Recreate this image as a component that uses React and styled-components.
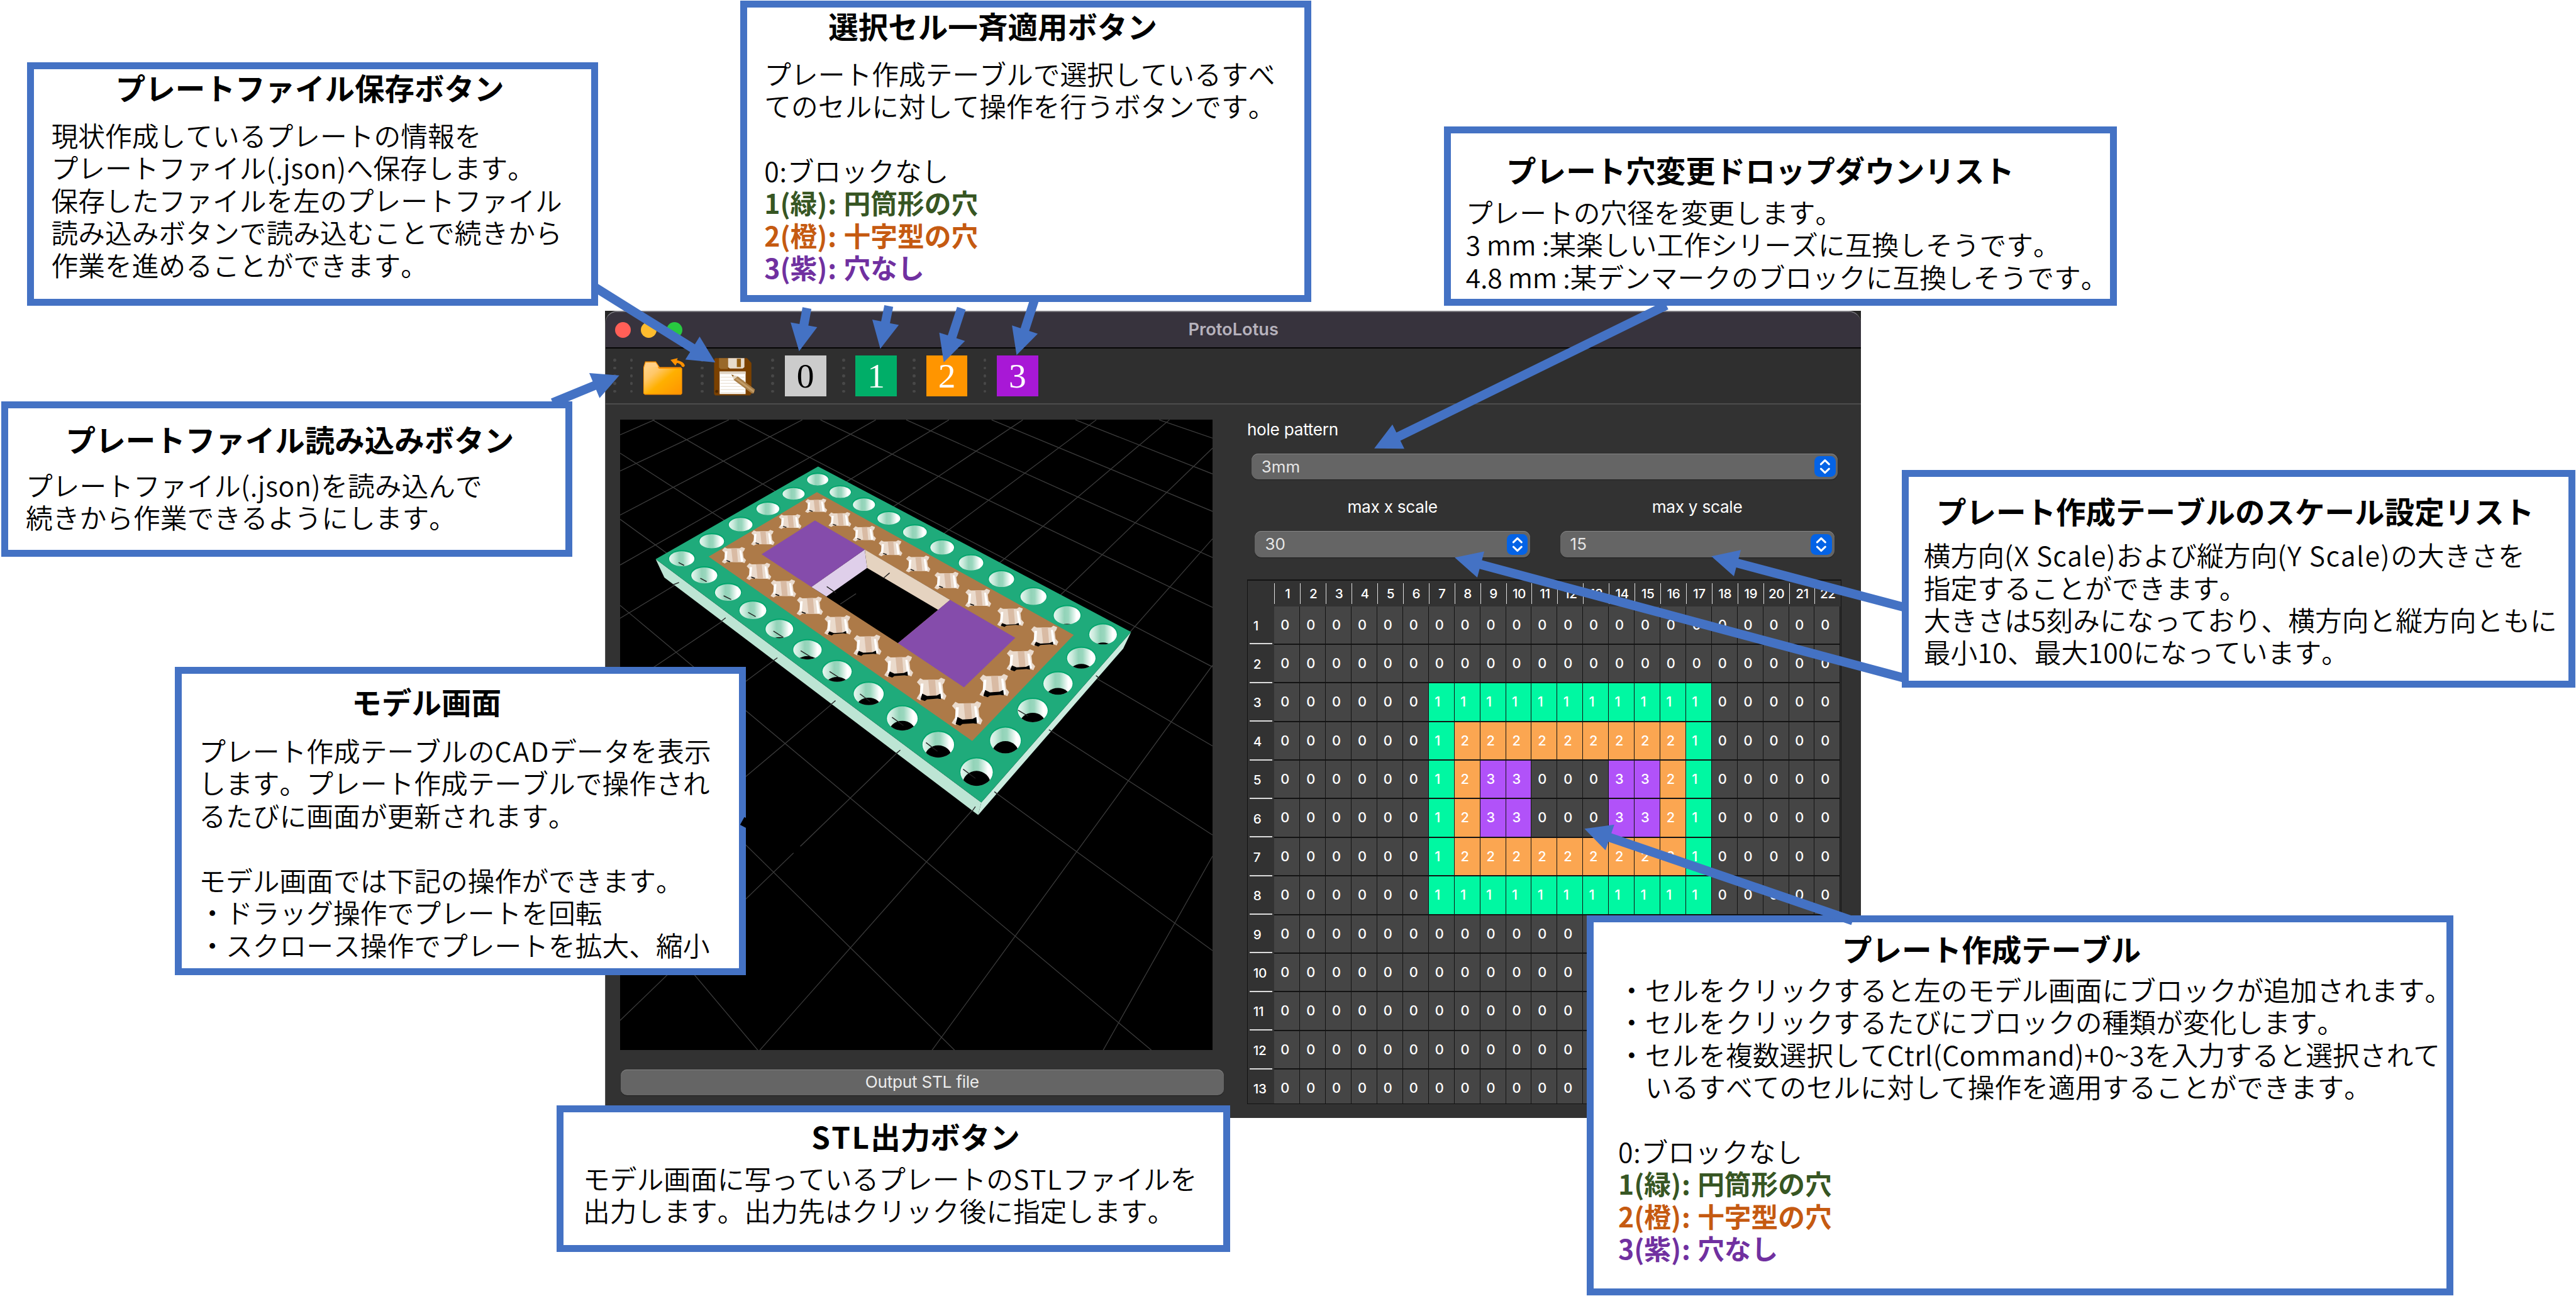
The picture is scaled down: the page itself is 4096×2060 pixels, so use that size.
import React from 'react';
import styled, { createGlobalStyle } from 'styled-components';

/* 1rem = 100 design units */
const r = (n) => `${(n / 100).toFixed(4)}rem`;

const BLUE = '#4472c4';

const Global = createGlobalStyle`
  html { font-size: 51.842px; }
  body { margin: 0; background: #fff; overflow: hidden; }
  *, *::before, *::after { box-sizing: border-box; }
`;

const Canvas = styled.main`
  position: relative;
  width: ${r(7901)};
  height: ${r(3973)};
  overflow: hidden;
  background: #fff;
  font-family: Inter, "Liberation Sans", sans-serif;
`;

/* ---------- application window ---------- */

const WindowBack = styled.section`
  position: absolute;
  left: ${r(1856)};
  top: ${r(953)};
  width: ${r(3852)};
  height: ${r(2475)};
  background: #262626;
`;

const AppWindow = styled.div`
  display: flex;
  flex-direction: column;
  height: 100%;
  background: #323232;
  border-radius: ${r(38)} ${r(38)} 0 0;
  border-top: 2px solid #7c7b81;
  border-left: 1px solid #5b5b5b;
  overflow: hidden;
`;

const TitleBar = styled.header`
  display: grid;
  grid-template-columns: 1fr auto 1fr;
  align-items: center;
  flex: none;
  height: ${r(112)};
  background: #37333d;
  border-bottom: 2px solid #050505;
`;

const Lights = styled.div`
  display: flex;
  gap: ${r(31.5)};
  padding-left: ${r(28)};
`;

const Light = styled.span`
  width: ${r(48)};
  height: ${r(48)};
  border-radius: 50%;
  background: ${(p) => p.$color};
`;

const WindowTitle = styled.h1`
  margin: 0;
  font-size: ${r(52.5)};
  line-height: 1;
  font-weight: 600;
  color: #b6b2bc;
`;

const Toolbar = styled.div`
  display: flex;
  align-items: center;
  flex: none;
  height: ${r(171)};
  padding-left: ${r(23)};
  background: #2f2f2f;
  border-bottom: 2px solid #4c4c4c;
`;

const Grip = styled.span`
  display: flex;
  flex-direction: column;
  justify-content: space-between;
  width: ${r(10)};
  height: ${r(104)};
  margin-right: ${(p) => r(p.$gap)};
`;

const GripDot = styled.i`
  width: ${r(9)};
  height: ${r(9)};
  border-radius: 50%;
  background: #484848;
`;

const ToolButton = styled.button`
  display: flex;
  align-items: center;
  justify-content: center;
  width: ${r(127)};
  height: ${r(127)};
  margin: 0 ${r(49)} 0 0;
  padding: 0;
  border: 0;
  background: ${(p) => p.$bg || 'transparent'};
  color: ${(p) => p.$fg || '#fff'};
  font: ${r(107)}/1 "Liberation Serif", serif;
`;

const ToolIcon = styled.svg`
  display: block;
  width: 100%;
  height: 100%;
`;

const Content = styled.div`
  display: flex;
  flex: 1;
  min-height: 0;
  padding: ${r(46)} 0 0 ${r(44)};
`;

const ModelColumn = styled.div`
  display: flex;
  flex-direction: column;
  flex: none;
  width: ${r(1923)};
`;

const ModelView = styled.svg`
  display: block;
  width: ${r(1817)};
  height: ${r(1934)};
  background: #000;
`;

const OutputButton = styled.button`
  width: ${r(1849)};
  height: ${r(80)};
  margin: ${r(59)} 0 0 ${r(2)};
  padding: 0;
  border: 0;
  border-radius: ${r(19)};
  background: #656565;
  box-shadow: inset 0 1px 0 #858585, 0 1px 1px rgba(0, 0, 0, 0.4);
  color: #ececec;
  font: ${r(50.5)}/1 Inter, sans-serif;
  letter-spacing: -0.01em;
`;

const SettingsColumn = styled.div`
  display: flex;
  flex-direction: column;
  flex: none;
  width: ${r(1824)};
`;

const Label = styled.label`
  display: block;
  height: ${r(60)};
  line-height: ${r(60)};
  font-size: ${r(50.5)};
  letter-spacing: -0.01em;
  color: #fff;
  text-align: ${(p) => (p.$center ? 'center' : 'left')};
`;

const Select = styled.div`
  display: flex;
  align-items: center;
  justify-content: space-between;
  width: ${(p) => r(p.$w)};
  height: ${r(80)};
  padding: 0 ${r(7)} 0 ${r(31)};
  border-radius: ${r(21)};
  background: #656565;
  box-shadow: inset 0 1px 0 #858585, 0 1px 1px rgba(0, 0, 0, 0.4);
  color: #e6e6e6;
  font-size: ${r(50)};
  line-height: 1;
`;

const Stepper = styled.svg`
  display: block;
  width: ${r(65)};
  height: ${r(64)};
  border-radius: ${r(16)};
  background: #0463e6;
`;

const HoleRow = styled.div`
  padding: ${r(45)} 0 0 ${r(13)};
`;

const ScaleRow = styled.div`
  display: flex;
  gap: ${r(92)};
  padding: ${r(53)} 0 0 ${r(24)};
`;

const ScaleField = styled.div`
  display: flex;
  flex-direction: column;
  gap: ${r(45)};
`;

const TableFrame = styled.div`
  width: ${r(1823)};
  height: ${r(1608)};
  margin-top: ${r(68)};
  border: 1px solid #131313;
  border-top-width: 2px;
  overflow: hidden;
`;

const HeaderRow = styled.div`
  display: flex;
  align-items: center;
  height: ${r(78)};
  padding-left: ${r(82)};
`;

const HeaderCell = styled.div`
  flex: none;
  width: ${r(78.92)};
  height: ${r(64)};
  border-left: 1px solid #e0e0e0;
  line-height: ${r(66)};
  font-size: ${r(40)};
  font-weight: 500;
  letter-spacing: -0.02em;
  text-align: center;
  color: #fff;
`;

const BodyRow = styled.div`
  display: flex;
  height: ${r(118.4)};
`;

const RowHeader = styled.div`
  display: flex;
  align-items: center;
  flex: none;
  width: ${r(75)};
  margin: 0 ${r(7)} 0 0;
  padding-left: ${r(17)};
  position: relative;
  font-size: ${r(40)};
  font-weight: 500;
  letter-spacing: -0.02em;
  color: #fff;
  &::after {
    content: '';
    position: absolute;
    left: ${r(6)};
    right: 0;
    bottom: ${r(1)};
    height: 2px;
    background: #dcdcdc;
  }
`;

const cellColors = ['#454545', '#00f8a2', '#fba651', '#b152f9'];

const Cell = styled.div`
  flex: none;
  width: ${r(78.92)};
  height: 100%;
  padding-left: ${(p) => r(p.$kind === 1 ? 18 : 19)};
  border: solid #131313;
  border-width: 0 1px 2px 0;
  background: ${(p) => cellColors[p.$kind]};
  line-height: ${r(112)};
  font-size: ${r(42)};
  font-weight: 500;
  color: #fff;
`;

/* ---------- callouts ---------- */

const Callout = styled.article`
  position: absolute;
  left: ${(p) => r(p.$x)};
  top: ${(p) => r(p.$y)};
  width: ${(p) => r(p.$w)};
  height: ${(p) => r(p.$h)};
  border: 11px solid ${BLUE};
  background: #fff;
  color: #000;
  font-family: "Noto Sans CJK JP", sans-serif;
  font-kerning: none;
  text-spacing-trim: space-all;
  white-space: pre;
`;

const CalloutTitle = styled.h2`
  margin: ${(p) => r(p.$top)} 0 0 ${(p) => r(p.$left)};
  font-size: ${r(91.67)};
  line-height: ${r(110)};
  font-weight: 700;
`;

const CalloutBody = styled.div`
  margin: ${(p) => r(p.$top)} 0 0 ${(p) => r(p.$left)};
  font-size: ${r(82.5)};
  line-height: ${r(99.2)};
`;

const Line = styled.p`
  margin: 0;
  height: ${r(99.2)};
  color: ${(p) => p.$color || 'inherit'};
  font-weight: ${(p) => (p.$color ? 700 : 350)};
`;

const Latin = styled.span`
  letter-spacing: ${(p) => p.$s}em;
`;

const Overlay = styled.svg`
  position: absolute;
  inset: 0;
  width: 100%;
  height: 100%;
  pointer-events: none;
`;

/* titleAt / bodyAt: [left edge, vertical centre of the first line] on the canvas */
function Note({ box, titleAt, bodyAt, title, children }) {
  const [x, y, w, h] = box;
  const titleTop = titleAt[1] - 61;
  const bodyTop = bodyAt[1] - 55.5;
  return (
    <Callout $x={x} $y={y} $w={w} $h={h}>
      <CalloutTitle $top={titleTop - y - 21.2} $left={titleAt[0] - x - 21.2}>{title}</CalloutTitle>
      <CalloutBody $top={bodyTop - titleTop - 110} $left={bodyAt[0] - x - 21.2}>{children}</CalloutBody>
    </Callout>
  );
}

function Legend() {
  return (
    <>
      <Line><Latin $s={0.02}>0:</Latin>ブロックなし</Line>
      <Line $color="#375623">1(緑<Latin $s={0.018}>): </Latin>円筒形の穴</Line>
      <Line $color="#c55a11">2(橙<Latin $s={0.018}>): </Latin>十字型の穴</Line>
      <Line $color="#7030a0">3(紫<Latin $s={0.018}>): </Latin>穴なし</Line>
    </>
  );
}

/* ---------- arrows ---------- */

function Arrow({ from, to }) {
  const [x1, y1] = from;
  const [x2, y2] = to;
  const len = Math.hypot(x2 - x1, y2 - y1);
  const ux = (x2 - x1) / len;
  const uy = (y2 - y1) / len;
  const bx = x2 - ux * 82.5;
  const by = y2 - uy * 82.5;
  const pt = (cx, cy, d) => `${(cx - uy * d).toFixed(1)},${(cy + ux * d).toFixed(1)}`;
  const points = [
    pt(x1, y1, 13.8), pt(bx, by, 13.8), pt(bx, by, 41.5), `${x2},${y2}`,
    pt(bx, by, -41.5), pt(bx, by, -13.8), pt(x1, y1, -13.8),
  ].join(' ');
  return <polygon points={points} fill={BLUE} />;
}

const arrows = [
  [[1820, 878], [2194, 1111]],
  [[1695, 1235], [1899.5, 1151]],
  [[2475, 944.5], [2451, 1077]],
  [[2726, 938], [2700, 1069]],
  [[2948.7, 945], [2894.7, 1111]],
  [[3172, 922], [3118, 1089]],
  [[5111, 936], [4215, 1375]],
  [[5845, 2080], [4462, 1709.6]],
  [[5845, 1863], [5249, 1705.7]],
  [[5682.6, 2823], [4859.7, 2541]],
];

/* ---------- model view ---------- */

const gridLines = [
  [1407, 23, 1542, 67], [1195, 23, 1542, 153], [983, 23, 1542, 243], [767, 23, 1542, 354],
  [550, 23, 1542, 474], [340, 23, 1542, 617], [125, 23, 1542, 807], [43, 103, 1542, 1021],
  [43, 262, 1542, 1299], [43, 469, 1388, 1539], [43, 748, 890, 1539], [43, 1145, 392, 1539],
  [130, 23, 43, 59], [318, 23, 43, 146], [504, 23, 43, 252], [690, 23, 43, 372],
  [875, 23, 43, 500], [1062, 23, 43, 672], [1248, 23, 43, 877], [1433, 23, 43, 1135],
  [1542, 91, 43, 1467], [1542, 309, 396, 1539], [1542, 613, 832, 1539], [1542, 1072, 1265, 1539],
];

/* cx, cy, rx, ry, share of the hole that is open to the background */
const roundHoles = [
  [543, 167, 27, 14, 0], [482, 201, 28, 14, 0], [417, 237, 29, 15, 0], [348, 275, 30, 16, 0],
  [275, 315, 31, 17, 0], [199, 357, 32, 18, 0], [256, 397, 33, 19, 0], [316, 438, 33, 20, 0],
  [379, 481, 34, 21, 0], [446, 526, 35, 22, 0.08], [517, 576, 36, 23, 0.2], [592, 628, 37, 25, 0.26],
  [672, 682, 38, 27, 0.36], [757, 741, 39, 29, 0.43], [848, 804, 40, 31, 0.5], [945, 870, 41, 33, 0.57],
  [600, 197, 27, 14, 0], [660, 227, 28, 15, 0], [723, 260, 29, 15, 0], [789, 293, 30, 16, 0],
  [858, 330, 30, 17, 0], [931, 367, 31, 18, 0], [1008, 406, 32, 19, 0], [1089, 448, 33, 20, 0],
  [1174, 493, 34, 22, 0.06], [1265, 539, 35, 24, 0.12], [1210, 596, 36, 25, 0.25],
  [1151, 657, 37, 27, 0.33], [1087, 722, 38, 28, 0.43], [1018, 794, 39, 31, 0.5],
];

const crossHoles = [
  [539, 230], [473, 268], [404, 307], [331, 349], [394, 388], [456, 429], [523, 471], [594, 517],
  [669, 565], [748, 616], [831, 671], [921, 729], [599, 263], [661, 297], [727, 332], [797, 370],
  [870, 410], [949, 452], [1031, 497], [1117, 543], [1057, 601], [990, 662],
];

const edgeTicks = [
  [176, 420, 192, 414], [298, 508, 310, 499], [429, 603, 441, 595], [577, 707, 588, 698],
  [742, 825, 752, 817], [933, 965, 942, 953], [709, 404, 725, 391], [566, 424, 589, 439],
  [1247, 638, 1257, 645], [1128, 768, 1136, 773], [990, 917, 998, 923],
];

const cellTicks = [
  [191, 366, 205, 373], [246, 404, 262, 412], [305, 446, 324, 455], [367, 486, 386, 496],
  [431, 531, 456, 546], [500, 578, 524, 592], [573, 628, 596, 642], [650, 682, 675, 700],
  [731, 738, 760, 758], [817, 799, 846, 820], [911, 863, 942, 885], [1050, 721, 1075, 735],
];

function RoundHole({ hole, id }) {
  const [cx, cy, rx, ry, open] = hole;
  return (
    <g>
      <ellipse cx={cx} cy={cy - 1.5} rx={rx + 2} ry={ry + 1.5} fill="#00a56c" />
      <clipPath id={id}><ellipse cx={cx} cy={cy} rx={rx} ry={ry} /></clipPath>
      <ellipse cx={cx} cy={cy} rx={rx} ry={ry} fill="url(#bore)" />
      {open > 0 && (
        <ellipse clipPath={`url(#${id})`} cx={cx} cy={cy + 2 * ry * (1 - open)} rx={rx * 0.86} ry={ry * 0.95} fill="#000" />
      )}
    </g>
  );
}

function CrossHole({ x, y }) {
  const t = (y - 230) / 500;
  const sx = 28 + 11 * t;
  const sy = 17.5 + 12 * t;
  return (
    <g transform={`translate(${x} ${y}) scale(${sx.toFixed(2)} ${sy.toFixed(2)})`}>
      <polygon
        fill="#eadacc"
        points="-.98,-.62 -.76,-.95 -.56,-.82 .48,-.84 .64,-1 .92,-.85 .85,-.58 .74,-.4 .8,.25 1,.55 .88,.9 .66,.8 -.56,.78 -.76,.95 -1,.78 -.84,.45 -.74,.3 -.76,-.3"
      />
      <polygon fill="#d9bba4" points="-.22,-.82 .24,-.84 .34,.78 -.1,.78" />
      <polygon fill="#fff" points=".46,-.6 .6,-.6 .78,.7 .58,.78" />
      <polygon fill="#fff" points="-.72,-.5 -.54,-.5 -.6,.5 -.8,.6" />
      {y > 490 && (
        <polygon
          fill="#000"
          points={`-.62,${(1 - 0.72 * t).toFixed(2)} -.3,${(1.1 - 0.6 * t).toFixed(2)} .35,${(1.05 - 0.6 * t).toFixed(2)} .6,${(0.95 - 0.66 * t).toFixed(2)} .64,.84 .4,.8 -.3,.86 -.45,1 -.74,.86`}
        />
      )}
      {y <= 490 && <polygon fill="#111" points="-.6,.55 -.3,.7 -.34,.8 -.62,.66" />}
    </g>
  );
}

function Model() {
  return (
    <ModelView viewBox="43 22.5 1499 1516.5" preserveAspectRatio="none">
      <defs>
        <linearGradient id="bore">
          <stop offset="0" stopColor="#e9f7f1" />
          <stop offset="0.18" stopColor="#c9eadc" />
          <stop offset="0.4" stopColor="#92d3b8" />
          <stop offset="0.55" stopColor="#9ad7be" />
          <stop offset="0.85" stopColor="#fff" />
        </linearGradient>
      </defs>
      <g stroke="#3c3c3c" strokeWidth="2">
        {gridLines.map((l, i) => <line key={i} x1={l[0]} y1={l[1]} x2={l[2]} y2={l[3]} />)}
      </g>
      <polygon fill="#bde5d4" points="133,358 957,943 949,973 155,402" />
      <polygon fill="#cbecdf" points="957,943 1336,533 1316,573 949,973" />
      <polygon fill="#1fab7b" points="544,135 1336,533 957,943 133,358" />
      <polygon fill="#ad7a48" points="541,197 1191,540 934,795 267,352" />
      <polygon fill="#000" points="661,335 878,456 746,560 527,425" />
      <polyline fill="none" stroke="#3c3c3c" strokeWidth="2" points="600,466 640,441" />
      <polygon fill="#dfcfea" points="662,335 527,425 565,448 668,379" />
      <polygon fill="#e5d3c0" points="662,335 878,456 848,480 668,379" />
      <polygon fill="#854cab" points="536,265 662,335 527,425 401,346" />
      <polygon fill="#854cab" points="878,456 1043,547 913,666 746,560" />
      {roundHoles.map((h, i) => <RoundHole key={i} hole={h} id={`bore-${i}`} />)}
      {crossHoles.map(([x, y]) => <CrossHole key={`${x}-${y}`} x={x} y={y} />)}
      <g stroke="#222" strokeWidth="2.2">
        {edgeTicks.concat(cellTicks).map((l, i) => <line key={i} x1={l[0]} y1={l[1]} x2={l[2]} y2={l[3]} />)}
      </g>
    </ModelView>
  );
}

/* ---------- toolbar pieces ---------- */

function GripHandle({ gap }) {
  return <Grip $gap={gap}>{[0, 1, 2, 3, 4].map((i) => <GripDot key={i} />)}</Grip>;
}

function FolderIcon() {
  return (
    <ToolIcon viewBox="138 453 142 381" preserveAspectRatio="none">
      <defs>
        <linearGradient id="folder" x1="0" y1="0" x2="1" y2="1">
          <stop offset="0" stopColor="#ffd795" />
          <stop offset="0.3" stopColor="#ffc768" />
          <stop offset="0.55" stopColor="#ffb000" />
          <stop offset="1" stopColor="#ff9300" />
        </linearGradient>
      </defs>
      <path d="M144 508H181L194 560H266L271 572V803L267 815H143L138 803V560Z" fill="#ff9000" />
      <path d="M146 520H180L191 574H269V800L266 806H143L140 798V568Z" fill="url(#folder)" />
      <path d="M146 518H180L190 556L150 562L141 572Z" fill="#ffcf86" />
      <path d="M231 493L256 477L253 496C269 504 280 526 280 548L276 560L270 556C268 536 260 522 253 522L248 547Z" fill="#ff9100" />
    </ToolIcon>
  );
}

function FloppyIcon() {
  return (
    <ToolIcon viewBox="381 453 142 381" preserveAspectRatio="none">
      <path d="M386 477H495L510 522V806L505 821H386L382 808V490Z" fill="#7b4100" />
      <path d="M399 477H430V577H404L399 565Z" fill="#99692a" />
      <path d="M430 477H486V560L480 573H436L430 560Z" fill="#e7dccd" />
      <rect x="460" y="483" width="14" height="77" fill="#935f14" />
      <rect x="401" y="601" width="89" height="207" fill="#fff" />
      <rect x="401" y="601" width="89" height="23" fill="#e0d4c4" />
      {[649, 678, 706, 735, 763, 792].map((y) => <rect key={y} x="404" y={y} width="83" height="7" fill="#e9dfd2" />)}
      <ellipse cx="391" cy="784" rx="5" ry="14" fill="#4d2800" />
      <path d="M441 630L462 642L466 668L452 688Z" fill="#e3d3bb" />
      <path d="M441 630L449 634L447 650Z" fill="#8a5a18" />
      <path d="M449 678L463 645L522 765L518 801L512 803Z" fill="#a87e48" />
      <path d="M455 672L460 660L520 778L517 795Z" fill="#c39d68" />
    </ToolIcon>
  );
}

function Chevrons() {
  return (
    <Stepper viewBox="0 0 65 64">
      <g fill="none" stroke="#fff" strokeWidth="6" strokeLinecap="round" strokeLinejoin="round">
        <path d="M20 25L32.5 13L45 25" />
        <path d="M20 39L32.5 51L45 39" />
      </g>
    </Stepper>
  );
}

/* ---------- table data ---------- */

const blank = '0000000000000000000000';
const covered = '000000000000          ';
const plate = [
  blank,
  blank,
  '0000001111111111100000',
  '0000001222222222100000',
  '0000001233000332100000',
  '0000001233000332100000',
  '0000001222222222100000',
  '0000001111111111100000',
  covered, covered, covered, covered, covered,
];

function PlateTable() {
  return (
    <TableFrame>
      <HeaderRow>
        {[...blank].map((_, i) => <HeaderCell key={i}>{i + 1}</HeaderCell>)}
      </HeaderRow>
      {plate.map((row, y) => (
        <BodyRow key={y}>
          <RowHeader>{y + 1}</RowHeader>
          {[...row].map((c, x) => <Cell key={x} $kind={Number(c)}>{c.trim()}</Cell>)}
        </BodyRow>
      ))}
    </TableFrame>
  );
}

function ProtoLotus() {
  return (
    <WindowBack>
      <AppWindow>
        <TitleBar>
          <Lights>
            <Light $color="#ff5f57" />
            <Light $color="#febc2e" />
            <Light $color="#28c840" />
          </Lights>
          <WindowTitle>ProtoLotus</WindowTitle>
          <span />
        </TitleBar>
        <Toolbar>
          <GripHandle gap={41} />
          <GripHandle gap={31} />
          <ToolButton><FolderIcon /></ToolButton>
          <GripHandle gap={31} />
          <ToolButton><FloppyIcon /></ToolButton>
          <GripHandle gap={31} />
          <ToolButton $bg="#cccccc" $fg="#000">0</ToolButton>
          <GripHandle gap={31} />
          <ToolButton $bg="#00ae68">1</ToolButton>
          <GripHandle gap={31} />
          <ToolButton $bg="#ff9500">2</ToolButton>
          <GripHandle gap={31} />
          <ToolButton $bg="#a818d6">3</ToolButton>
        </Toolbar>
        <Content>
          <ModelColumn>
            <Model />
            <OutputButton>Output STL file</OutputButton>
          </ModelColumn>
          <SettingsColumn>
            <Label>hole pattern</Label>
            <HoleRow><Select $w={1799}>3mm<Chevrons /></Select></HoleRow>
            <ScaleRow>
              <ScaleField>
                <Label $center>max x scale</Label>
                <Select $w={844}>30<Chevrons /></Select>
              </ScaleField>
              <ScaleField>
                <Label $center>max y scale</Label>
                <Select $w={841}>15<Chevrons /></Select>
              </ScaleField>
            </ScaleRow>
            <PlateTable />
          </SettingsColumn>
        </Content>
      </AppWindow>
    </WindowBack>
  );
}

export default function App() {
  return (
    <>
      <Global />
      <Canvas>
        <ProtoLotus />

        <Note box={[82, 191, 1752, 747]} titleAt={[354.6, 274]} bodyAt={[157, 420]} title="プレートファイル保存ボタン">
          <Line>現状作成しているプレートの情報を</Line>
          <Line>プレートファイル<Latin $s={0.0155}>(.json)</Latin>へ保存します。</Line>
          <Line>保存したファイルを左のプレートファイル</Line>
          <Line>読み込みボタンで読み込むことで続きから</Line>
          <Line>作業を進めることができます。</Line>
        </Note>

        <Note box={[4, 1230, 1752, 477]} titleAt={[201.8, 1351.6]} bodyAt={[79, 1492]} title="プレートファイル読み込みボタン">
          <Line>プレートファイル<Latin $s={0.0155}>(.json)</Latin>を読み込んで</Line>
          <Line>続きから作業できるようにします。</Line>
        </Note>

        <Note box={[2269.5, 1, 1752, 924]} titleAt={[2541, 84.5]} bodyAt={[2344, 230.4]} title="選択セル一斉適用ボタン">
          <Line>プレート作成テーブルで選択しているすべ</Line>
          <Line>てのセルに対して操作を行うボタンです。</Line>
          <Line />
          <Legend />
        </Note>

        <Note box={[4429, 388, 2063.5, 550]} titleAt={[4620, 525.4]} bodyAt={[4496, 654.8]} title="プレート穴変更ドロップダウンリスト">
          <Line>プレートの穴径を変更します。</Line>
          <Line>3 mm :某楽しい工作シリーズに互換しそうです。</Line>
          <Line><Latin $s={-0.006}>4.8 mm :</Latin>某デンマークのブロックに互換しそうです。</Line>
        </Note>

        <Note box={[5833.5, 1441, 2066, 667]} titleAt={[5939, 1572]} bodyAt={[5900, 1707]} title="プレート作成テーブルのスケール設定リスト">
          <Line>横方向<Latin $s={0.0256}>(X Scale)</Latin>および縦方向<Latin $s={0.035}>(Y Scale)</Latin>の大きさを</Line>
          <Line>指定することができます。</Line>
          <Line>大きさは<Latin $s={0.01}>5</Latin>刻みになっており、横方向と縦方向ともに</Line>
          <Line>最小<Latin $s={0.01}>10</Latin>、最大<Latin $s={0.01}>100</Latin>になっています。</Line>
        </Note>

        <Note box={[4867, 2806, 2657, 1166]} titleAt={[5650, 2914.7]} bodyAt={[4963, 3039.5]} title="プレート作成テーブル">
          <Line>・セルをクリックすると左のモデル画面にブロックが追加されます。</Line>
          <Line>・セルをクリックするたびにブロックの種類が変化します。</Line>
          <Line>・セルを複数選択して<Latin $s={0.012}>Ctrl(Command)+0~3</Latin>を入力すると選択されて</Line>
          <Line>　いるすべてのセルに対して操作を適用することができます。</Line>
          <Line />
          <Legend />
        </Note>

        <Note box={[536.6, 2045, 1751, 945]} titleAt={[1079, 2155]} bodyAt={[610, 2306.7]} title="モデル画面">
          <Line>プレート作成テーブルの<Latin $s={0.045}>CAD</Latin>データを表示</Line>
          <Line>します。プレート作成テーブルで操作され</Line>
          <Line>るたびに画面が更新されます。</Line>
          <Line />
          <Line>モデル画面では下記の操作ができます。</Line>
          <Line>・ドラッグ操作でプレートを回転</Line>
          <Line>・スクロース操作でプレートを拡大、縮小</Line>
        </Note>

        <Note
          box={[1707.5, 3389, 2065.5, 450]}
          titleAt={[2489, 3489]}
          bodyAt={[1788, 3618]}
          title={<><Latin $s={0.05}>STL</Latin>出力ボタン</>}
        >
          <Line>モデル画面に写っているプレートの<Latin $s={0.04}>STL</Latin>ファイルを</Line>
          <Line>出力します。出力先はクリック後に指定します。</Line>
        </Note>

        <Overlay viewBox="0 0 7901 3973" preserveAspectRatio="none">
          {arrows.map(([from, to], i) => <Arrow key={i} from={from} to={to} />)}
          <polygon points="2283,2505 2460,2598 2447,2622 2270,2529" fill="#000" />
        </Overlay>
      </Canvas>
    </>
  );
}
